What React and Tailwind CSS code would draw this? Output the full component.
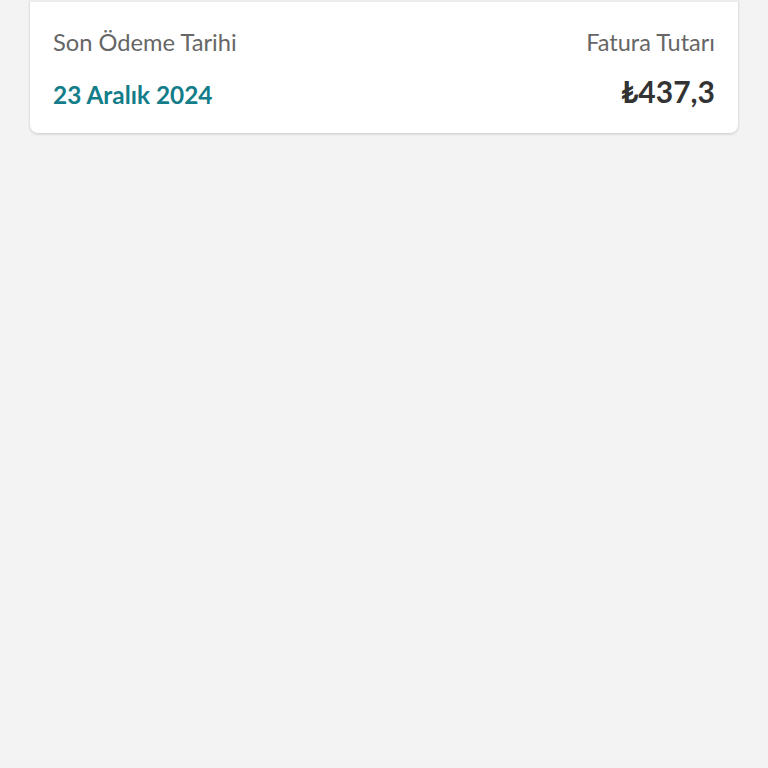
export default function App() {
  return (
    <div className="min-h-screen w-full bg-[#f3f3f3] px-[30px]" style={{ fontFamily: "Lato, 'Open Sans', sans-serif" }}>
      <div className="rounded-b-lg bg-white shadow-[0_1px_3px_rgba(0,0,0,0.18)]">
        <div className="h-[2px] bg-[#ececec]" />
        <div className="flex items-start justify-between px-[23px] pt-[26px] pb-[24px]">
          <div className="flex flex-col">
            <span className="text-[23.7px] leading-[28px] text-[#666666]">Son Ödeme Tarihi</span>
            <span className="mt-[25px] text-[24.4px] font-bold leading-[28px] text-[#137d89]">23 Aralık 2024</span>
          </div>
          <div className="flex flex-col items-end">
            <span className="text-[23.5px] leading-[28px] text-[#666666]">Fatura Tutarı</span>
            <span className="mt-[20px] text-[30px] font-bold leading-[30px] text-[#333333]">₺437,3</span>
          </div>
        </div>
      </div>
    </div>
  );
}
